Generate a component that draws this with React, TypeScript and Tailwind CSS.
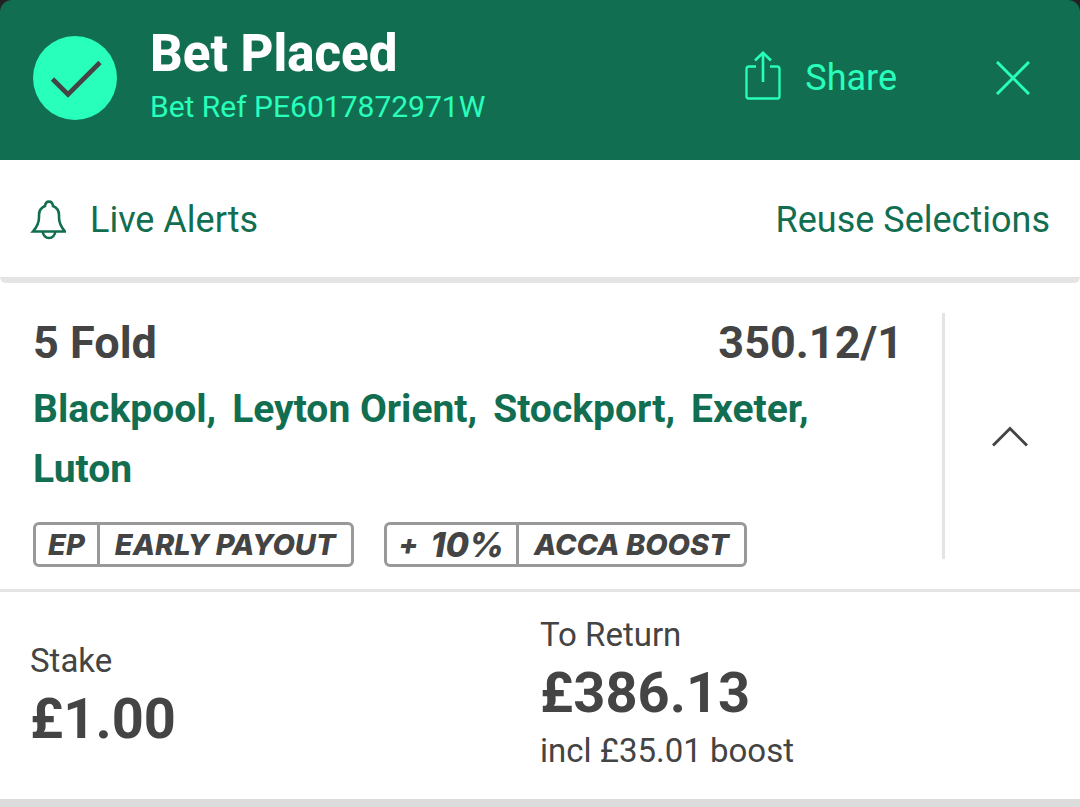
import React, { useState } from 'react';

const selections = ['Blackpool', 'Leyton Orient', 'Stockport', 'Exeter', 'Luton'];

const CheckBadge: React.FC = () => (
  <svg viewBox="0 0 84 84" fill="none" className="w-[84px] h-[84px] shrink-0" aria-hidden="true">
    <circle cx="42" cy="42" r="42" fill="#28ffbb" />
    <path d="M19.5 43L35 58.5L67 26.5" stroke="#444" strokeWidth="4.6" />
  </svg>
);

const ShareIcon: React.FC = () => (
  <svg viewBox="0 0 36 54" fill="none" stroke="currentColor" className="w-9 h-[54px]" aria-hidden="true">
    <path d="M11 15.5H4A2.5 2.5 0 0 0 1.5 18v27.5A2 2 0 0 0 3.5 47.5h29a2 2 0 0 0 2-2V18A2.5 2.5 0 0 0 32 15.5h-7" strokeWidth="2.3" />
    <path d="M18 31V2M10 9.5L18 1.8L26 9.5" strokeWidth="2.6" />
  </svg>
);

const CloseIcon: React.FC = () => (
  <svg viewBox="0 0 34 34" fill="none" stroke="currentColor" strokeWidth="3" className="w-[34px] h-[34px]" aria-hidden="true">
    <path d="M1 1l32 32M33 1L1 33" />
  </svg>
);

const BellIcon: React.FC = () => (
  <svg viewBox="0 0 36 40" fill="none" stroke="currentColor" strokeWidth="2.6" className="w-9 h-10" aria-hidden="true">
    <path d="M3 31.5C6.5 27.5 9 23.5 9 17.5V15C9 10 11.5 7.5 15 6C15.3 3.2 16.5 1.6 19 1.6S22.7 3.2 23 6C26.5 7.5 29 10 29 15V17.5C29 23.5 31.5 27.5 35 31.5Z" />
    <path d="M12.8 31.5a6.2 6.5 0 0 0 12.4 0" />
  </svg>
);

const ChevronIcon: React.FC<{ open: boolean }> = ({ open }) => (
  <svg viewBox="0 0 36 22" fill="none" stroke="currentColor" strokeWidth="3" className={open ? 'w-9 h-[22px]' : 'w-9 h-[22px] rotate-180'} aria-hidden="true">
    <path d="M1 20.5L18 3.5L35 20.5" />
  </svg>
);

interface OfferBadgeProps {
  tag: React.ReactNode;
  label: string;
}

const OfferBadge: React.FC<OfferBadgeProps> = ({ tag, label }) => (
  <div className="flex h-[45px] items-stretch rounded-md border-3 border-[#999] font-['Inter',sans-serif] text-[29px] leading-[39px] font-extrabold italic whitespace-nowrap">
    <span className="flex items-center gap-3 border-r-3 border-[#999] px-3">{tag}</span>
    <span className="px-[15px]">{label}</span>
  </div>
);

const App: React.FC = () => {
  const [open, setOpen] = useState(true);

  return (
    <div className="bg-[#222] font-['Roboto',sans-serif] text-[#444]">
      <header className="flex min-h-40 items-center justify-between rounded-t-xl bg-[#126e51] pb-1 pl-[33px] pr-[50px] text-[#28ffbb]">
        <div className="flex items-center gap-[33px]">
          <CheckBadge />
          <div className="pb-0.5">
            <h1 className="text-[51px] leading-[60px] font-extrabold text-white">Bet Placed</h1>
            <p className="text-[30px] leading-[46px]">Bet Ref PE6017872971W</p>
          </div>
        </div>
        <div className="flex items-center gap-[99px]">
          <button type="button" className="flex items-center gap-6 text-[36px] leading-10">
            <ShareIcon />
            Share
          </button>
          <button type="button" aria-label="Close">
            <CloseIcon />
          </button>
        </div>
      </header>

      <nav className="flex min-h-[117px] items-center justify-between bg-white px-[30px] pt-0.5 text-[36px] leading-10 text-[#126e51]">
        <button type="button" className="flex items-center gap-6">
          <BellIcon />
          Live Alerts
        </button>
        <button type="button">Reuse Selections</button>
      </nav>

      <main className="bg-white">
        <div className="h-1.5 rounded-b-md bg-[#e4e4e4]" />
        <section className="flex py-[30px]">
          <div className="flex-1 pl-[33px] pr-[39px]">
            <div className="flex justify-between text-[45px] leading-[60px] font-bold">
              <h2>5 Fold</h2>
              <span>350.12/1</span>
            </div>
            {open && (
              <ul className="flex flex-wrap gap-x-4 pt-1.5 text-[39px] leading-[60px] font-bold text-[#126e51]">
                {selections.map((name, index) => (
                  <li key={name}>
                    {name}
                    {index < selections.length - 1 && ','}
                  </li>
                ))}
              </ul>
            )}
            <div className="mt-[23px] -mb-2 flex flex-wrap gap-[30px]">
              <OfferBadge tag="EP" label="EARLY PAYOUT" />
              <OfferBadge
                tag={
                  <>
                    <span>+</span>
                    <span className="text-[34px]">10%</span>
                  </>
                }
                label="ACCA BOOST"
              />
            </div>
          </div>
          <button
            type="button"
            aria-label="Toggle selections"
            aria-expanded={open}
            onClick={() => setOpen(!open)}
            className="flex w-[138px] shrink-0 items-center justify-center border-l-3 border-[#e4e4e4] pr-1.5"
          >
            <ChevronIcon open={open} />
          </button>
        </section>

        <section className="grid min-h-[218px] grid-cols-2 items-center border-t-3 border-b-8 border-t-[#e4e4e4] border-b-[#dcdcdc]">
          <div className="pt-1.5 pl-[30px]">
            <p className="text-[33px] leading-10">Stake</p>
            <p className="text-[56px] leading-[76px] font-bold">£1.00</p>
          </div>
          <div className="pb-1.5">
            <p className="text-[33px] leading-10">To Return</p>
            <p className="text-[56px] leading-[76px] font-bold">£386.13</p>
            <p className="text-[33px] leading-10">incl £35.01 boost</p>
          </div>
        </section>
      </main>
    </div>
  );
};

export default App;
